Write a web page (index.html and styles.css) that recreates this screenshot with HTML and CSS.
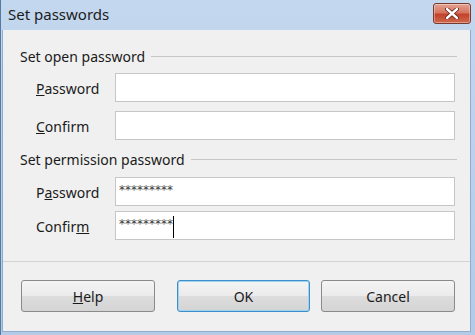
FILE: index.html
```html
<!DOCTYPE html>
<html lang="en">
<head>
    <meta charset="UTF-8">
    <title>Set passwords</title>
    <link rel="stylesheet" href="styles.css">
</head>
<body>

    <div class="window">
        <!-- Title bar -->
        <div class="titlebar">
            <span class="title">Set passwords</span>
            <button class="close-btn" aria-label="Close">
                <svg width="14" height="11" viewBox="0 0 14 11">
                    <path d="M2 1 L12 10 M12 1 L2 10" stroke="#5a1a10" stroke-width="4" stroke-linecap="round"/>
                    <path d="M2 1 L12 10 M12 1 L2 10" stroke="#fff" stroke-width="2.4" stroke-linecap="round"/>
                </svg>
            </button>
        </div>

        <div class="content">
            <div class="sections">
                <!-- Open password -->
                <div class="group-head">
                    <span>Set open password</span>
                    <div class="rule"></div>
                </div>
                <div class="rows">
                    <div class="row">
                        <label><u>P</u>assword</label>
                        <div class="field"></div>
                    </div>
                    <div class="row">
                        <label><u>C</u>onfirm</label>
                        <div class="field"></div>
                    </div>
                </div>

                <!-- Permission password -->
                <div class="group-head second">
                    <span>Set permission password</span>
                    <div class="rule"></div>
                </div>
                <div class="rows tight">
                    <div class="row">
                        <label>P<u>a</u>ssword</label>
                        <div class="field"><span class="stars">*********</span></div>
                    </div>
                    <div class="row">
                        <label>Confir<u>m</u></label>
                        <div class="field"><span class="stars">*********</span><span class="caret"></span></div>
                    </div>
                </div>
            </div>

            <div class="footer">
                <button class="btn"><u>H</u>elp</button>
                <div class="spacer"></div>
                <button class="btn default">OK</button>
                <button class="btn">Cancel</button>
            </div>
        </div>
    </div>

</body>
</html>
```

FILE: styles.css
```css
/* Basic Reset */
* {
    margin: 0;
    padding: 0;
    box-sizing: border-box;
}

body {
    font-family: 'Noto Sans', 'Open Sans', sans-serif;
    font-size: 14px;
    color: #1a1a1a;
    background: #ffffff;
}

/* Window frame */
.window {
    width: 475px;
    height: 335px;
    display: flex;
    flex-direction: column;
    background: linear-gradient(#c3d8ee, #b3cbe6);
    border-left: 1px solid #56799f;
    padding: 0 4px 3px 1px;
}

.titlebar {
    height: 30px;
    display: flex;
    align-items: center;
    justify-content: space-between;
    padding: 0 0 0 6px;
}

.title {
    font-size: 15px;
    color: #1b1b1b;
    margin-top: -2px;
}

.close-btn {
    width: 38px;
    height: 21px;
    margin-top: -4px;
    border: 1px solid #7a3a30;
    border-radius: 3px;
    background: linear-gradient(#e3a394 0%, #d6755f 45%, #c2432b 55%, #cf6a4c 100%);
    display: flex;
    align-items: center;
    justify-content: center;
    box-shadow: inset 0 0 0 1px rgba(255, 255, 255, 0.35);
}

/* Client area */
.content {
    flex: 1;
    background: #f0f0f0;
    border: 1px solid #8eaccc;
    border-top: none;
    display: flex;
    flex-direction: column;
}

.sections {
    padding: 16px 13px 0 17px;
}

.group-head {
    height: 20px;
    display: flex;
    align-items: center;
    gap: 6px;
}

.group-head.second {
    margin-top: 9px;
}

.rule {
    flex: 1;
    height: 1px;
    background: #c5c5c5;
    margin-top: 1px;
}

.rows {
    display: flex;
    flex-direction: column;
    gap: 9px;
    margin-top: 7px;
    padding: 0 2px 0 16px;
}

.rows.tight {
    gap: 5px;
    margin-top: 8px;
}

.row {
    display: flex;
    align-items: center;
}

.row label {
    width: 79px;
    color: #1a1a1a;
    margin-top: 2px;
}

.field {
    flex: 1;
    height: 29px;
    background: #fff;
    border: 1px solid #c6c6c6;
    display: flex;
    align-items: center;
    padding-left: 3px;
}

.stars {
    font-family: 'DejaVu Sans', sans-serif;
    font-size: 12px;
    color: #3a3a3a;
    margin-top: -3px;
}

.caret {
    width: 1px;
    height: 22px;
    background: #000;
    align-self: flex-end;
    margin-bottom: 1px;
    margin-left: 0;
}

/* Buttons */
.footer {
    margin-top: auto;
    border-top: 1px solid #d2d2d2;
    height: 70px;
    display: flex;
    align-items: flex-start;
    padding: 18px 15px 0 18px;
    gap: 11px;
}

.spacer {
    flex: 1;
}

.btn {
    width: 135px;
    height: 32px;
    border: 1px solid #8a8a8a;
    border-radius: 3px;
    background: linear-gradient(#f4f4f4 0%, #ebebeb 50%, #dddddd 51%, #d4d4d4 100%);
    font-family: inherit;
    font-size: 14px;
    color: #1a1a1a;
}

.btn.default {
    width: 134px;
    border-color: #3c8fc8;
    box-shadow: inset 0 0 0 1px #9fd3f3;
}
```
